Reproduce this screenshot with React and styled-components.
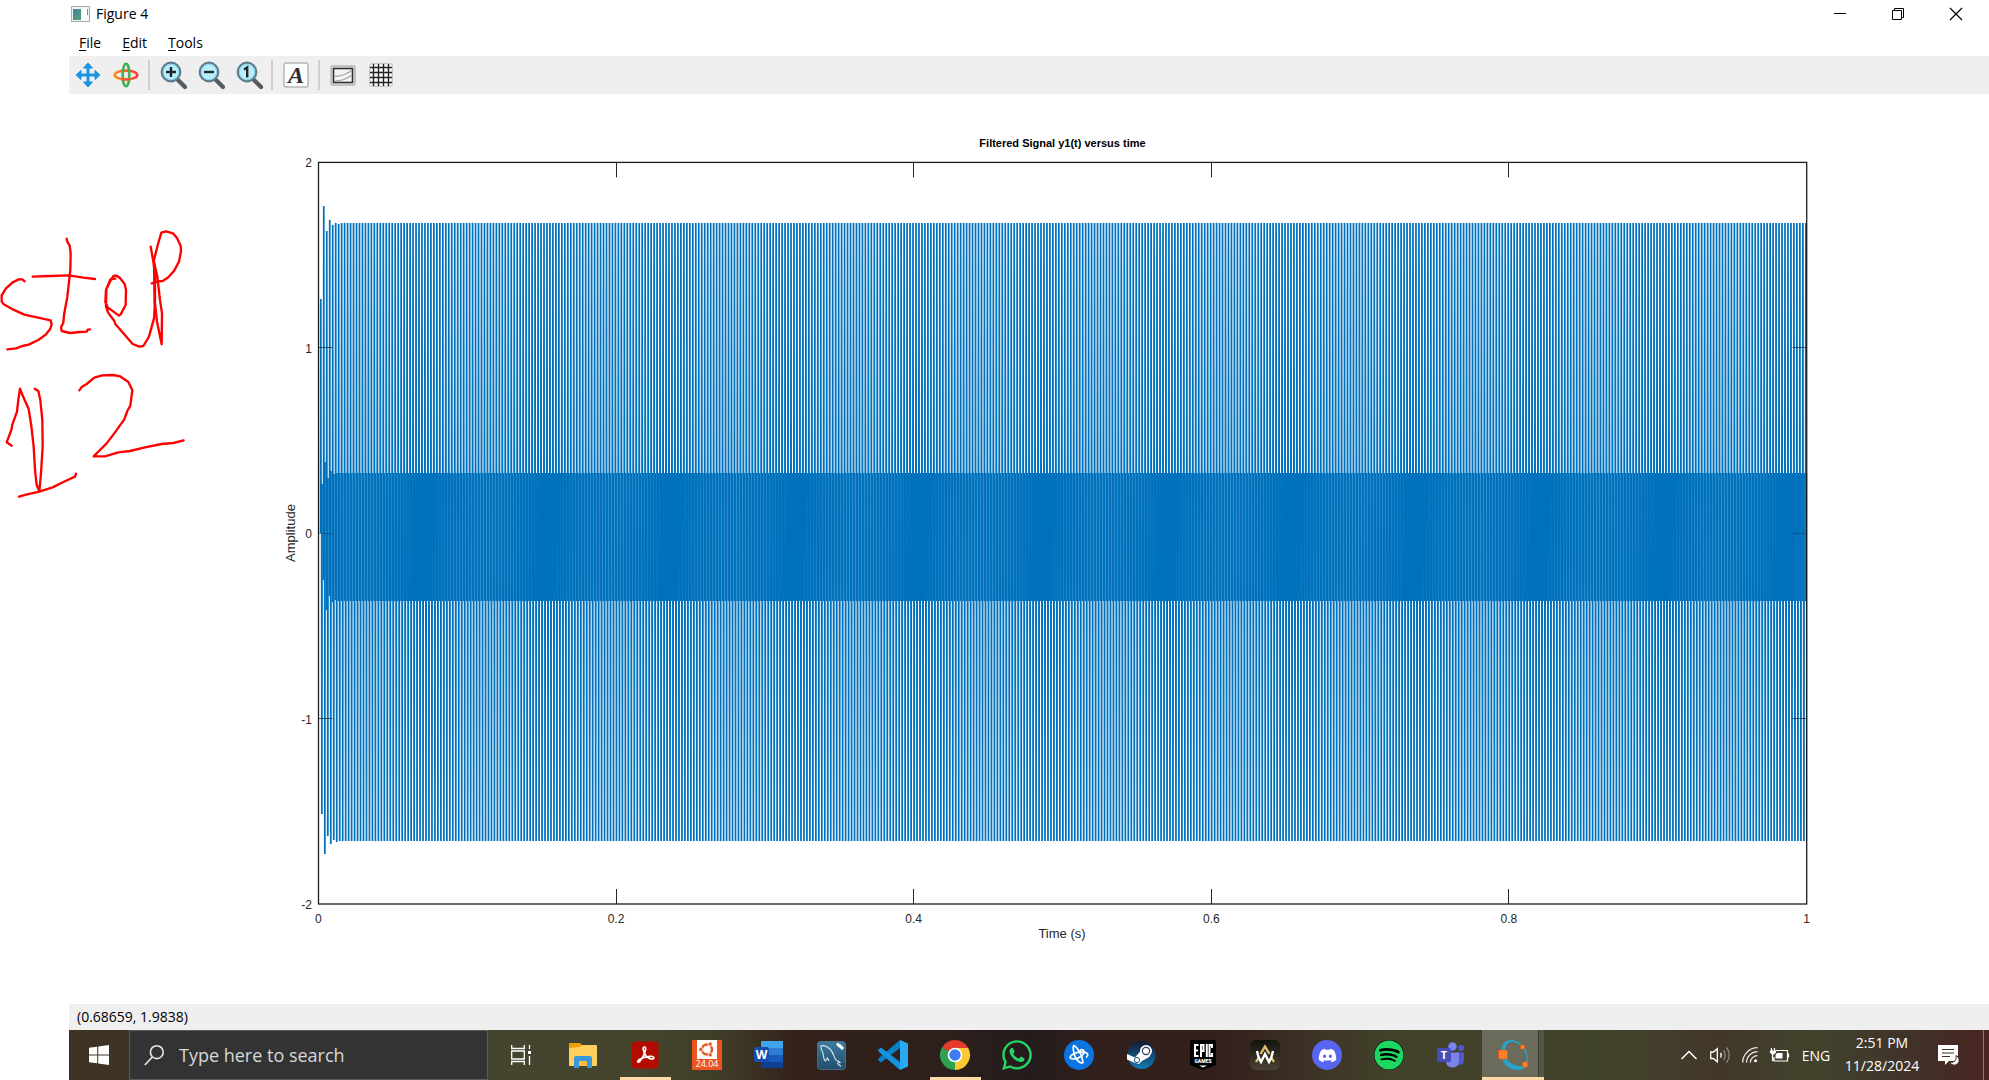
import React from "react";
import styled, { createGlobalStyle, css } from "styled-components";
import { FaWhatsapp, FaSpotify, FaDiscord, FaBattleNet } from "react-icons/fa";

const GlobalStyle = createGlobalStyle`
  *, *::before, *::after { box-sizing: border-box; }
  body { margin: 0; background: #fff; }
  button { border: 0; padding: 0; background: none; color: inherit; font: inherit; }
  svg { display: block; flex: none; overflow: visible; }
`;

const uiFont = `"Open Sans", "Noto Sans", sans-serif`;

const Page = styled.div`
  position: relative;
  min-height: 100vh;
  display: flex;
  flex-direction: column;
  padding-left: 69px;
  overflow: hidden;
  font-family: ${uiFont};
  font-size: 14px;
  color: #000;
`;
const TitleBar = styled.header`
  height: 28px;
  display: flex;
  align-items: center;
  padding: 0 4px 0 2px;
  gap: 6px;
`;
const Title = styled.h1`
  flex: 1;
  margin: 0;
  font-size: 14px;
  line-height: 20px;
  font-weight: 400;
`;
const WindowButtons = styled.div`
  display: flex;
`;
const WindowButton = styled.button`
  width: 58px;
  height: 28px;
  display: grid;
  place-items: center;
`;
const MenuBar = styled.nav`
  height: 28px;
  display: flex;
  align-items: center;
  gap: 21px;
  padding: 2px 0 0 10px;
`;
const MenuItem = styled.button`
  line-height: 20px;
  &::first-letter { text-decoration: underline; text-underline-offset: 2px; }
`;
const ToolBar = styled.div`
  height: 38px;
  display: flex;
  align-items: center;
  background: #efefef;
`;
const ToolButton = styled.button`
  width: 38px;
  height: 38px;
  display: grid;
  place-items: center;
`;
const Separator = styled.span`
  width: 2px;
  height: 30px;
  margin: 0 4px 0 3px;
  background: #cfcfcf;
`;
const Figure = styled.main`
  flex: 1;
  min-height: 0;
  display: flex;
  svg { width: 100%; height: auto; }
`;
const StatusBar = styled.footer`
  height: 26px;
  padding-left: 8px;
  background: #efefef;
  line-height: 26px;
`;
const Annotation = styled.svg`
  position: absolute;
  left: 0;
  top: 210px;
  pointer-events: none;
`;

const TaskBar = styled.div`
  height: 50px;
  display: flex;
  color: #fff;
  background: linear-gradient(90deg, #3d3224 0%, #3f3726 12%, #44442f 23%, #45442d 30%, #3f3c27 34%,
    #33211b 38%, #2c1f1c 46%, #241c1c 50%, #33201d 54%, #331f1c 60%, #3c3024 64%, #42422b 69%,
    #42432b 80%, #42372a 86%, #42432c 91%, #40352a 95%, #482520 100%);
`;
const StartButton = styled.button`
  width: 60px;
  display: grid;
  place-items: center;
`;
const SearchBox = styled.label`
  width: 359px;
  display: flex;
  align-items: center;
  gap: 15px;
  padding-left: 14px;
  background: #333;
  border: 1px solid #5a5a5a;
`;
const SearchInput = styled.input`
  flex: 1;
  min-width: 0;
  border: 0;
  padding: 0;
  outline: 0;
  background: none;
  color: #d8d8d8;
  font: 18px/24px ${uiFont};
  &::placeholder { color: #d8d8d8; opacity: 1; }
`;
const Apps = styled.div`
  flex: 1;
  display: flex;
  padding-left: 2px;
`;
const AppButton = styled.button`
  position: relative;
  width: 62px;
  height: 50px;
  display: grid;
  place-items: center;
  ${(p) => p.$open && css`
    &::after {
      content: "";
      position: absolute;
      left: 6px;
      right: 5px;
      bottom: 0;
      height: 3px;
      background: #ffd9a8;
    }
  `}
  ${(p) => p.$active && css`
    background: linear-gradient(90deg, #6a6b5a 56px, #3c3d2e 56px, #3c3d2e 57px, #54564a 57px);
    &::after { left: 0; right: 0; }
  `}
`;
const Disc = styled.span`
  width: 30px;
  height: 30px;
  display: grid;
  place-items: center;
  border-radius: 50%;
  background: ${(p) => p.$fill};
  color: #fff;
`;
const Tray = styled.div`
  display: flex;
  align-items: center;
`;
const TrayButton = styled.button`
  width: ${(p) => p.$w}px;
  height: 50px;
  display: grid;
  place-items: center;
`;
const Clock = styled.button`
  width: 90px;
  height: 50px;
  padding-bottom: 2px;
  text-align: center;
  line-height: 23px;
`;
const ShowDesktop = styled.button`
  width: 6px;
  height: 50px;
  margin-left: 14px;
  border-left: 1px solid #8b7a74;
`;

/* ---- plot ---- */

const X0 = 249.4;
const X1 = 1737.6;
const Y0 = 68.4;
const Y1 = 810;
const PERIOD = 2.976;
const CYCLES = 500;

const peaks = [205, 112, 137, 126, 131, 129, 130];
const peakFeet = [439, 486, 516, 502, 508, 506];
const troughs = [720, 760, 742, 750, 746, 748, 747];
const troughHeads = [390, 368, 384, 377, 380];
const pick = (list, i, rest) => (i < list.length ? list[i] : rest);

const bar = (cx, top, bottom, wTop, wBottom) =>
  `M${(cx - wTop / 2).toFixed(2)} ${top}L${(cx + wTop / 2).toFixed(2)} ${top}L${(cx + wBottom / 2).toFixed(2)} ${bottom}L${(cx - wBottom / 2).toFixed(2)} ${bottom}Z`;

let upper = "";
let lower = "";
for (let i = 0; i < CYCLES; i++) {
  upper += bar(251.8 + i * PERIOD, pick(peaks, i, 129), pick(peakFeet, i, 507), 1.75, 2.1);
  lower += bar(252.85 + i * PERIOD, pick(troughHeads, i, 379), pick(troughs, i, 747), 2.1, 1.75);
}

const xTicks = ["0", "0.2", "0.4", "0.6", "0.8", "1"];
const yTicks = ["2", "1", "0", "-1", "-2"];

function Plot() {
  return (
    <svg viewBox="0 0 1920 910" fontFamily='"Liberation Sans", Arial, sans-serif' fill="#262626" role="img" aria-label="Filtered Signal y1(t) versus time">
      <defs>
        <clipPath id="axes"><rect x={X0} y={Y0} width={X1 - X0 + 0.6} height={Y1 - Y0} /></clipPath>
      </defs>
      <text x="993.5" y="53" fontSize="11" fontWeight="700" textAnchor="middle" fill="#000">Filtered Signal y1(t) versus time</text>
      <g clipPath="url(#axes)" fill="#0072bd">
        <path d={upper} />
        <path d={lower} />
      </g>
      <rect x={X0 + 0.1} y={Y0} width={X1 - X0} height={Y1 - Y0} fill="none" stroke="#1c1c1c" strokeWidth="1.3" />
      {xTicks.map((t, i) => {
        const x = X0 + ((X1 - X0) * i) / 5;
        return (
          <g key={t}>
            {i > 0 && i < 5 && <path d={`M${Math.floor(x) + 0.5} ${Y0}v15M${Math.floor(x) + 0.5} ${Y1}v-15`} stroke="#262626" />}
            <text x={x} y="829" fontSize="12" textAnchor="middle">{t}</text>
          </g>
        );
      })}
      {yTicks.map((t, i) => {
        const y = Y0 + ((Y1 - Y0) * i) / 4;
        return (
          <g key={t}>
            {i > 0 && i < 4 && <path d={`M${X0} ${Math.floor(y) + 0.5}h14M${X1} ${Math.floor(y) + 0.5}h-14`} stroke="#0b2b45" strokeOpacity={i === 2 ? 0.4 : 0.75} />}
            <text x="243" y={Math.round(y + 5)} fontSize="12" textAnchor="end">{t}</text>
          </g>
        );
      })}
      <text x="993" y="844" fontSize="13" textAnchor="middle">Time (s)</text>
      <text transform="translate(226 439) rotate(-90)" fontSize="13" textAnchor="middle">Amplitude</text>
    </svg>
  );
}

function Handwriting() {
  return (
    <Annotation width="200" height="300" viewBox="0 0 600 900" fill="none" stroke="#fe0000" strokeWidth="7" strokeLinecap="round" strokeLinejoin="round" aria-hidden="true">
      <path d="M74 214L67 208L56 208L38 217L18 235L5 256L5 274L10 282L40 299L73 314L152 331L155 344L150 358L138 373L115 390L86 404L67 408L48 415L22 418" />
      <path d="M200 86L202 95L209 107L212 130L211 180L202 260L192 315L190 338L183 352L185 363L210 369L240 366L260 365L263 359L270 358" />
      <path d="M98 200L150 198L207 196L250 203L285 207" />
      <path d="M346 206L331 208L318 240L316 276L323 292L357 317L362 313L377 285L378 240L374 222L358 202L348 197L340 198L330 215L319 238L318 290L324 307L343 333L346 342L398 402L418 410L430 408L447 380L462 325L464 295L462 150L474 102L484 68L498 64L519 70L531 84L542 107L543 123L537 155L522 183L505 202L488 213L474 214L455 220" />
      <path d="M452 110L461 160L465 200L465 280L471 335L485 403L486 310L480 270L472 200L463 160" />
      <path d="M35 707L20 697L34 660L37 644L51 605L55 570L60 536L66 552L86 597L94 648L101 710L105 780L110 825L118 843L123 790L128 710L127 630L121 571L115 543L104 536" />
      <path d="M57 860L78 854L118 845L158 832L190 816L225 800L228 791" />
      <path d="M238 541L246 530L260 522L283 503L307 496L340 495L360 499L385 516L397 541L391 587L382 603L373 628L345 667L320 700L294 726L281 739L315 739L355 727L390 723L435 712L485 702L520 699L551 691" />
    </Annotation>
  );
}

/* ---- tool bar icons ---- */

const FigureIcon = () => (
  <svg width="19" height="16" viewBox="0 0 19 16">
    <defs><linearGradient id="fig" x1="0" y1="0" x2="1" y2="1"><stop offset="0" stopColor="#4c7fb0" /><stop offset="1" stopColor="#4fa56c" /></linearGradient></defs>
    <rect x=".5" y=".5" width="18" height="15" fill="#f3f3f3" stroke="#a9adb2" />
    <rect x="2" y="3" width="8" height="11" fill="url(#fig)" />
    <path d="M11 3h5v11h-5z" fill="#fff" /><path d="M16 3h1v6h-1z" fill="#5ba08a" />
  </svg>
);
const PanIcon = () => (
  <svg width="26" height="26" viewBox="0 0 26 26" fill="#1b93e3" stroke="#1b93e3">
    <path d="M13 5v16M5 13h16" strokeWidth="3" />
    <path d="M13 1l4.500 5h-9zM13 25l4.500-5h-9zM1 13l5-4.500v9zM25 13l-5-4.500v9z" strokeWidth="1" strokeLinejoin="round" />
  </svg>
);
const RotateIcon = () => (
  <svg width="26" height="26" viewBox="0 0 26 26" fill="none" strokeWidth="2.600">
    <defs><linearGradient id="rot"><stop offset="0" stopColor="#ff8a1c" /><stop offset="1" stopColor="#fb3b3b" /></linearGradient></defs>
    <ellipse cx="13" cy="13" rx="11.300" ry="4.400" stroke="url(#rot)" />
    <ellipse cx="13" cy="13" rx="3.300" ry="11.300" stroke="#43b052" />
    <path d="M8 17q4 .6 9.500 0" stroke="#ff5b30" />
  </svg>
);
const Lens = ({ children }) => (
  <svg width="27" height="29" viewBox="0 0 27 29">
    <path d="M17 18l8 8" stroke="#545a5e" strokeWidth="4.200" strokeLinecap="round" />
    <circle cx="11" cy="11" r="9.300" fill="#b9effb" stroke="#5d7d8d" strokeWidth="2.200" />
    <circle cx="11" cy="11" r="7.600" fill="none" stroke="#8cd6ef" />
    <g stroke="#20282c" strokeWidth="2.400" fill="none">{children}</g>
  </svg>
);
const TextIcon = () => (
  <svg width="26" height="26" viewBox="0 0 26 26">
    <rect x="1" y="1" width="24" height="24" rx="2" fill="#fdfdfd" stroke="#b8b8b8" strokeWidth="1.500" />
    <text x="13" y="21" fontFamily='"Liberation Serif", serif' fontSize="24" fontWeight="700" fontStyle="italic" textAnchor="middle" fill="#2b2e31">A</text>
  </svg>
);
const AxesIcon = () => (
  <svg width="26" height="21" viewBox="0 0 26 21" fill="none">
    <rect x="1" y="1" width="24" height="19" rx="1.500" fill="#e6e6e6" stroke="#b8b8b8" strokeWidth="1.500" />
    <rect x="3.500" y="3.500" width="19" height="14" fill="#f4f4f4" stroke="#303030" strokeWidth="1.600" />
    <path d="M5 11.500q9-.5 17-6M5 16q9 0 17-6" stroke="#a5a5a5" strokeWidth="1.500" />
  </svg>
);
const GridIcon = () => (
  <svg width="24" height="24" viewBox="0 0 24 24">
    <rect x=".7" y=".7" width="22.600" height="22.600" rx="2" fill="#fafafa" stroke="#b8b8b8" />
    <path d="M4.500 1v22M9.500 1v22M14.500 1v22M19.500 1v22M1 4.500h22M1 9.500h22M1 14.500h22M1 19.500h22" stroke="#222" strokeWidth="1.400" />
  </svg>
);

/* ---- task bar icons ---- */

const WindowsLogo = () => (
  <svg width="20" height="20" viewBox="0 0 20 20" fill="#fff">
    <path d="M0 2.800L8.200 1.700V9.500H0zM9.200 1.500L20 0V9.500H9.200zM0 10.500H8.200V18.300L0 17.200zM9.200 10.500H20V20L9.200 18.500z" />
  </svg>
);
const SearchIcon = () => (
  <svg width="20" height="21" viewBox="0 0 20 21" fill="none" stroke="#e8e8e8" strokeWidth="1.600">
    <circle cx="12.800" cy="7.200" r="6.400" /><path d="M8.300 12L.8 20" />
  </svg>
);
const TaskViewIcon = () => (
  <svg width="20" height="20" viewBox="0 0 20 20" fill="none" stroke="#fff" strokeWidth="1.300">
    <path d="M.7 0v3.500h12.600V0M.7 20v-3.500h12.600V20M.7 6h12.600v8H.7zM18.500 0v4M18.500 11v9" />
    <path d="M17 6h3v3h-3z" fill="#fff" stroke="none" />
  </svg>
);
const FolderIcon = () => (
  <svg width="28" height="25" viewBox="0 0 28 25">
    <path d="M0 1q0-1 1-1h10l3 3v3H0z" fill="#e8a100" />
    <path d="M0 5l11-1 2-2h14q1 0 1 1v19q0 1-1 1H1q-1 0-1-1z" fill="#ffd05c" />
    <path d="M5 25V15q0-2 2-2h14q2 0 2 2v10h-5v-7h-8v7z" fill="#3a96dd" />
    <path d="M10 18h8v5h-8z" fill="#f9bf3c" />
  </svg>
);
const AcrobatIcon = () => (
  <svg width="28" height="28" viewBox="0 0 28 28">
    <rect x=".5" y=".5" width="27" height="27" rx="4" fill="#b30b00" />
    <path d="M13.500 6c-2.500 0-1 4 .5 7 1.400 3 5 5.500 7.500 5s1.500-3-2.500-2.700c-3.500.2-8 1.500-10.500 3.200-3.500 2.500-1 3.800.8 1.200C11.500 17 14 11.500 14.500 9c.3-1.700 0-3-1-3z" fill="none" stroke="#fff" strokeWidth="1.700" />
  </svg>
);
const UbuntuIcon = () => (
  <svg width="30" height="30" viewBox="0 0 30 30">
    <path d="M0 0h30v30H0z" fill="#e95420" /><path d="M5 0h20v19H5z" fill="#fff" />
    <circle cx="15" cy="9.500" r="5" fill="none" stroke="#e95420" strokeWidth="2.400" />
    <path d="M15 9.500H8M15 9.500l4-7M15 9.500l4 7" stroke="#fff" strokeWidth="1.200" />
    <g fill="#e95420" stroke="#fff" strokeWidth=".8"><circle cx="8.800" cy="9.500" r="2.100" /><circle cx="18.200" cy="4.100" r="2.100" /><circle cx="18.200" cy="14.900" r="2.100" /></g>
    <text x="15" y="27" fontSize="9" fontFamily="Open Sans, sans-serif" fill="#fff" textAnchor="middle">24.04</text>
  </svg>
);
const WordIcon = () => (
  <svg width="30" height="28" viewBox="0 0 30 28">
    <path d="M7 1q0-1 1-1h21v7H7z" fill="#41a5ee" /><path d="M7 7h22v7H7z" fill="#2b7cd3" />
    <path d="M7 14h22v7H7z" fill="#185abd" /><path d="M7 21h22v6H8q-1 0-1-1z" fill="#103f91" />
    <rect y="6" width="15" height="15" rx="1.500" fill="#144fae" />
    <text x="7.500" y="17.800" fontSize="12" fontWeight="700" fontFamily="Open Sans, sans-serif" fill="#fff" textAnchor="middle">W</text>
  </svg>
);
const MySqlIcon = () => (
  <svg width="29" height="29" viewBox="0 0 29 29" fill="none" stroke="#d7e6ee" strokeWidth="1.100">
    <defs><linearGradient id="sql" x2="0" y2="1"><stop offset="0" stopColor="#3e7a9e" /><stop offset="1" stopColor="#214f6c" /></linearGradient></defs>
    <rect x=".5" y=".5" width="28" height="28" rx="3" fill="url(#sql)" stroke="#5b88a3" strokeWidth=".6" />
    <path d="M8 20C6 17 7 14 5.500 11 4 8 3 4.500 5 4.500c3 .2 5 .5 8 3.500 3 3.200 3.500 6 5 9.500 1 2.200 3.500 2.500 5 4-2 .2-3 0-2 1.500l3 2.500M8 20c1.500-1 1.500-2 2.500-3l1.500 3" />
    <path d="M20 2.500l3 3M22 4l4 4" stroke="#fff" strokeWidth="3" />
  </svg>
);
const CodeIcon = () => (
  <svg width="30" height="30" viewBox="0 0 30 30">
    <path d="M22 8L3 22.500 0 20 1 18 22 0z" fill="#0a80c8" />
    <path d="M22 22L3 7.500 0 10 1 12 22 30z" fill="#1295dc" />
    <path d="M22 0L30 3.500V26.500L22 30z" fill="#29a9f2" />
  </svg>
);
const ChromeIcon = () => (
  <svg width="30" height="30" viewBox="0 0 30 30">
    <path d="M15 15L2 7.500A15 15 0 0 1 28 7.500z" fill="#e33b2e" />
    <path d="M15 15L28 7.500A15 15 0 0 1 15 30z" fill="#fcc934" />
    <path d="M15 15L15 30A15 15 0 0 1 2 7.500z" fill="#2fa14f" />
    <path d="M15 8h13.300L15 30l6-11.500z" fill="#fcc934" />
    <path d="M2 7.500l7 11 6-3.500z" fill="#2fa14f" />
    <circle cx="15" cy="15" r="7.300" fill="#fff" /><circle cx="15" cy="15" r="5.700" fill="#3b7cf0" />
  </svg>
);
const SteamIcon = () => (
  <svg width="30" height="30" viewBox="0 0 30 30">
    <defs><linearGradient id="steam" x2="0" y2="1"><stop offset="0" stopColor="#131a35" /><stop offset="1" stopColor="#117bb0" /></linearGradient></defs>
    <circle cx="15.500" cy="15" r="14" fill="url(#steam)" />
    <path d="M1 14l8 3.500 6-7 9 6-8 4.500-3 3-5-1.500-7-3z" fill="#fff" />
    <circle cx="20" cy="11" r="6" fill="#fff" /><circle cx="20" cy="11" r="3.600" fill="none" stroke="#263a5e" strokeWidth="1.200" />
    <circle cx="11" cy="20" r="2.600" fill="none" stroke="#2c5c85" />
  </svg>
);
const EpicIcon = () => (
  <svg width="26" height="30" viewBox="0 0 26 30" fill="#fff" fontFamily="Roboto, sans-serif" fontWeight="900" textAnchor="middle">
    <path d="M2 0h22q2 0 2 2v23l-13 5-13-5V2q0-2 2-2z" fill="#000" />
    <g fill="none" stroke="#fff" strokeWidth="2"><path d="M8.500 5H5v11h3.500M5 10.500h3M11 17V5h2.500v6H11M16.800 4v13M22 8V5h-2.500v11H22v-3" /></g>
    <text x="13" y="22.500" fontSize="5">GAMES</text>
    <path d="M9 25.500h8L13 27.500z" />
  </svg>
);
const WolfIcon = () => (
  <svg width="30" height="30" viewBox="0 0 30 30" fill="none" strokeWidth="2.400">
    <defs><linearGradient id="wolf" x2="0" y2="1"><stop offset="0" stopColor="#14120f" /><stop offset="1" stopColor="#4a4232" /></linearGradient></defs>
    <rect width="30" height="30" rx="6" fill="url(#wolf)" />
    <path d="M6 22l3-5M24 22l-3-5M10.500 14L15 6.500l4.500 7.500" stroke="#e3bd6c" />
    <path d="M7 11c1 5 2 8 4 11l4-8 4 8c2-3 3-6 4-11" stroke="#fff" />
  </svg>
);
const BattleNetIcon = () => (
  <svg width="22" height="22" viewBox="0 0 22 22" fill="none" stroke="#fff" strokeWidth="1.700">
    <path d="M6 1.500c4 2 8 9 9 17-3 2-8-4-9-9s-1-8 0-8z" />
    <path d="M2 14c0-3 7-7 13-6 5 .5 6 3 3 5.500" />
    <path d="M2 14c3 2 10 1 14-5 1-2-1-4-4-3" />
  </svg>
);
const TeamsIcon = () => (
  <svg width="28" height="27" viewBox="0 0 28 27">
    <circle cx="24" cy="6" r="3" fill="#5059c9" /><circle cx="15.500" cy="4.500" r="4.200" fill="#7b83eb" />
    <path d="M19 10.500h8v8q0 4-4 4.500h-4z" fill="#5059c9" /><path d="M9 10.500h13v8q0 7-6.500 7T9 19z" fill="#7b83eb" />
    <rect y="6" width="14" height="14" rx="1.500" fill="#464eb8" />
    <text x="7" y="17" fontSize="11" fontWeight="700" fontFamily="Open Sans, sans-serif" fill="#fff" textAnchor="middle">T</text>
  </svg>
);
const OctaveIcon = () => (
  <svg width="30" height="30" viewBox="0 0 30 30">
    <path fillRule="evenodd" d="M13 0C22 0 30 9 30 19c0 7-3 11-9 11C11 30 3 24 3 12 3 5 7 0 13 0zm1 2C9 2 7 7 7 12c0 9 8 14 14 14 5 0 7.500-3 7.500-8C28.500 10 21 2 14 2z" fill="#25a4d0" />
    <g fill="#ff7f2a" stroke="#d45500" strokeWidth=".6"><path d="M.5 10h9v9h-9zM22.500 5h4v4h-4zM24.500 22h5.200v5.200h-5.200z" /></g>
  </svg>
);

const apps = [
  { name: "Task View", icon: <TaskViewIcon /> },
  { name: "File Explorer", icon: <FolderIcon /> },
  { name: "Acrobat", icon: <AcrobatIcon />, open: true },
  { name: "Ubuntu 24.04", icon: <UbuntuIcon /> },
  { name: "Word", icon: <WordIcon /> },
  { name: "MySQL Workbench", icon: <MySqlIcon /> },
  { name: "Visual Studio Code", icon: <CodeIcon /> },
  { name: "Chrome", icon: <ChromeIcon />, open: true },
  { name: "WhatsApp", icon: <FaWhatsapp size={34} color="#25d366" /> },
  { name: "Battle.net", icon: <Disc $fill="#0a74e0"><BattleNetIcon /></Disc> },
  { name: "Steam", icon: <SteamIcon /> },
  { name: "Epic Games", icon: <EpicIcon /> },
  { name: "Launcher", icon: <WolfIcon /> },
  { name: "Discord", icon: <Disc $fill="#5865f2"><FaDiscord size={19} /></Disc> },
  { name: "Spotify", icon: <Disc $fill="#000"><FaSpotify size={30} color="#1ed760" /></Disc> },
  { name: "Teams", icon: <TeamsIcon /> },
  { name: "Octave", icon: <OctaveIcon />, open: true, active: true },
];

export default function App() {
  return (
    <Page>
      <GlobalStyle />
      <TitleBar>
        <FigureIcon />
        <Title>Figure 4</Title>
        <WindowButtons>
          <WindowButton aria-label="Minimize"><svg width="12" height="12"><path d="M0 5.500h12" stroke="#000" /></svg></WindowButton>
          <WindowButton aria-label="Restore"><svg width="12" height="12" fill="none" stroke="#000"><path d="M.5 2.500h9v9h-9zM2.500 2.500v-2h9v9h-2" /></svg></WindowButton>
          <WindowButton aria-label="Close"><svg width="12" height="12"><path d="M0 0l12 12M12 0L0 12" stroke="#000" strokeWidth="1.200" /></svg></WindowButton>
        </WindowButtons>
      </TitleBar>
      <MenuBar>
        <MenuItem>File</MenuItem>
        <MenuItem>Edit</MenuItem>
        <MenuItem>Tools</MenuItem>
      </MenuBar>
      <ToolBar role="toolbar">
        <ToolButton aria-label="Pan"><PanIcon /></ToolButton>
        <ToolButton aria-label="Rotate"><RotateIcon /></ToolButton>
        <Separator />
        <ToolButton aria-label="Zoom in"><Lens><path d="M6 11h10M11 6v10" /></Lens></ToolButton>
        <ToolButton aria-label="Zoom out"><Lens><path d="M6 11h10" /></Lens></ToolButton>
        <ToolButton aria-label="Autoscale"><Lens><path d="M8 8.500l3.200-2V16.500" /></Lens></ToolButton>
        <Separator />
        <ToolButton aria-label="Insert text"><TextIcon /></ToolButton>
        <Separator />
        <ToolButton aria-label="Toggle axes"><AxesIcon /></ToolButton>
        <ToolButton aria-label="Toggle grid"><GridIcon /></ToolButton>
      </ToolBar>
      <Figure><Plot /></Figure>
      <StatusBar>(0.68659, 1.9838)</StatusBar>
      <TaskBar>
        <StartButton aria-label="Start"><WindowsLogo /></StartButton>
        <SearchBox>
          <SearchIcon />
          <SearchInput type="text" placeholder="Type here to search" aria-label="Type here to search" />
        </SearchBox>
        <Apps>
          {apps.map((a) => (
            <AppButton key={a.name} aria-label={a.name} $open={a.open} $active={a.active}>{a.icon}</AppButton>
          ))}
        </Apps>
        <Tray>
          <TrayButton $w={32} aria-label="Show hidden icons"><svg width="16" height="10" fill="none" stroke="#fff" strokeWidth="1.500"><path d="M.5 9L8 1.500 15.500 9" /></svg></TrayButton>
          <TrayButton $w={30} aria-label="Volume">
            <svg width="21" height="18" viewBox="0 0 21 18" fill="none" stroke="#fff" strokeWidth="1.300">
              <path d="M.7 6v6.500h2.800l3.800 3.300V2.700L3.500 6z" /><path d="M10.500 7q1.500 2 0 4.500" />
              <path d="M13.500 4.500q3.500 4.500 0 9.500M16.500 1.500q5.500 7.500 0 15" stroke="#8d8878" />
            </svg>
          </TrayButton>
          <TrayButton $w={30} aria-label="Network">
            <svg width="16" height="16" fill="none" stroke="#e8e8e8" strokeWidth="1.300">
              <path d="M.7 15.500A15 15 0 0 1 15.500 .7M4.500 15.500A11 11 0 0 1 15.500 4.700M8.300 15.500A7 7 0 0 1 15.500 8.700" /><circle cx="13.500" cy="13.700" r="1.500" fill="#fff" stroke="none" />
            </svg>
          </TrayButton>
          <TrayButton $w={30} aria-label="Battery">
            <svg width="20" height="14" fill="none" stroke="#fff" strokeWidth="1.200">
              <path d="M6 2.500h11.500v10.500H4V9M18.500 5.500v4M2.500 6v6.500H4M1.500 0v3M4.500 0v3" /><path d="M0 2.500h6v2L4 6.500H2l-2-2z" fill="#fff" stroke="none" /><path d="M7 5h5.500v5.500H5.500V7z" fill="#fff" stroke="none" />
            </svg>
          </TrayButton>
          <TrayButton $w={42}>ENG</TrayButton>
          <Clock>2:51 PM<br />11/28/2024</Clock>
          <TrayButton $w={42} aria-label="Notifications">
            <svg width="20" height="20" viewBox="0 0 20 20">
              <path d="M0 0h20v16h-9l-4 4v-4H0z" fill="#fff" />
              <path d="M4 4.500h12M4 8h12M4 11.500h8" stroke="#40332a" strokeWidth="1.200" />
              <path d="M18 10.500a5 5 0 1 1-6.500 6.500 5 5 0 0 0 6.500-6.500z" fill="#fff" stroke="#40332a" />
            </svg>
          </TrayButton>
          <ShowDesktop aria-label="Show desktop" />
        </Tray>
      </TaskBar>
      <Handwriting />
    </Page>
  );
}
